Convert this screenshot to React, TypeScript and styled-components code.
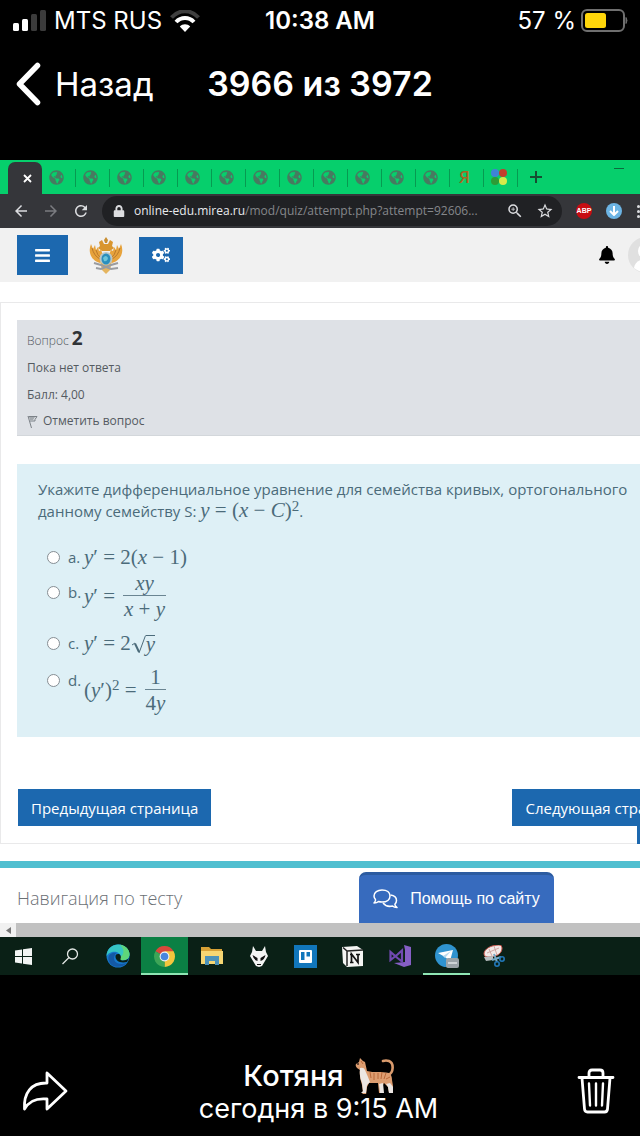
import React from "react";
import styled, { createGlobalStyle } from "styled-components";
import { FaBars, FaBell, FaCogs, FaLock, FaGlobeAmericas } from "react-icons/fa";
import { MdArrowBack, MdArrowForward, MdRefresh, MdStarBorder, MdZoomIn } from "react-icons/md";

const Global = createGlobalStyle`
  *, *::before, *::after { box-sizing: border-box; }
  body { margin: 0; background: #000; }
  button { font: inherit; border: 0; margin: 0; padding: 0; background: none; color: inherit; }
  p, h1, h2, ul { margin: 0; padding: 0; font: inherit; }
  svg { display: block; flex: none; }
`;

const Screen = styled.div`
  min-height: 100vh;
  display: flex;
  flex-direction: column;
  background: #000;
  color: #fff;
  overflow: hidden;
  font-family: Inter, "Liberation Sans", sans-serif;
`;

/* phone chrome */
const StatusBar = styled.div`
  display: grid;
  grid-template-columns: 1fr auto 1fr;
  align-items: center;
  height: 42px;
  padding: 0 12px;
  font-size: 24px;
  line-height: 28px;
`;
const StatusGroup = styled.div<{ $end?: boolean }>`
  display: flex;
  align-items: center;
  gap: ${(p) => (p.$end ? 5 : 8)}px;
  justify-content: ${(p) => (p.$end ? "flex-end" : "flex-start")};
  white-space: nowrap;
`;
const Clock = styled.time`
  font-weight: 600;
`;
const NavBar = styled.header`
  display: grid;
  grid-template-columns: 1fr auto 1fr;
  align-items: center;
  height: 84px;
  margin-bottom: 34px;
  padding: 0 16px;
`;
const BackButton = styled.button`
  display: flex;
  align-items: center;
  gap: 14px;
  font-size: 33px;
  line-height: 40px;
`;
const Title = styled.h1`
  font-size: 34px;
  line-height: 40px;
  font-weight: 600;
  white-space: nowrap;
`;

/* photo */
const Photo = styled.main`
  display: flex;
  flex-direction: column;
  overflow: hidden;
  background: #fff;
  color: #545a61;
  font-family: "Open Sans", "Noto Sans", sans-serif;
`;
const TabStrip = styled.div`
  display: flex;
  align-items: stretch;
  height: 34px;
  padding-left: 8px;
  background: #06cf6c;
`;
const ActiveTab = styled.button`
  display: flex;
  align-items: center;
  justify-content: center;
  width: 34px;
  margin-top: 2px;
  padding-left: 4px;
  border-radius: 7px 7px 0 0;
  background: #35363a;
`;
const Tab = styled.button`
  position: relative;
  display: flex;
  align-items: center;
  justify-content: center;
  width: 34px;
  padding-right: 5px;
  color: #477a60;
  font-size: 15px;
  &::after {
    content: "";
    position: absolute;
    right: 0;
    top: 9px;
    bottom: 7px;
    width: 1px;
    background: #079a51;
  }
`;
const Yandex = styled.span`
  color: #a8641f;
  font: 600 17px/18px "Open Sans", sans-serif;
`;
const NewTab = styled.button`
  display: flex;
  align-items: center;
  justify-content: center;
  width: 36px;
`;
const Minimise = styled.button`
  width: 10px;
  height: 1px;
  margin: 8px 16px 0 auto;
  background: #0c6b3d;
`;
const Toolbar = styled.div`
  display: flex;
  align-items: center;
  height: 34px;
  padding-left: 6px;
  background: #35363a;
  color: #dcdde0;
  overflow: hidden;
`;
const ToolButton = styled.button<{ $dim?: boolean }>`
  display: flex;
  align-items: center;
  justify-content: center;
  flex: none;
  width: 30px;
  font-size: 18px;
  color: ${(p) => (p.$dim ? "#7b7c80" : "#dcdde0")};
`;
const UrlBar = styled.div`
  display: flex;
  align-items: center;
  flex: 1;
  min-width: 0;
  height: 30px;
  margin-left: 6px;
  padding: 0 2px 0 11px;
  border-radius: 15px;
  background: #202124;
  font-size: 12px;
`;
const Url = styled.span`
  flex: 1;
  min-width: 0;
  margin-left: 9px;
  font-size: 12px;
  line-height: 20px;
  color: #85878b;
  white-space: nowrap;
  b { font-weight: 400; color: #e8eaed; }
`;
const Extension = styled.button<{ $bg: string }>`
  display: flex;
  align-items: center;
  justify-content: center;
  flex: none;
  width: 16px;
  height: 16px;
  margin-left: 14px;
  border-radius: 8px;
  background: ${(p) => p.$bg};
  color: #fff;
  font: 700 7px/16px "Liberation Sans", sans-serif;
`;
const MenuDots = styled.button`
  display: flex;
  flex-direction: column;
  gap: 2px;
  margin-left: 15px;
  i { display: block; width: 3px; height: 3px; border-radius: 2px; background: #dcdde0; }
`;

/* site */
const SiteHeader = styled.header`
  display: flex;
  align-items: center;
  height: 54px;
  padding-left: 17px;
  background: #f1f1f1;
  overflow: hidden;
`;
const SquareButton = styled.button<{ $wide?: boolean }>`
  display: flex;
  align-items: center;
  justify-content: center;
  width: ${(p) => (p.$wide ? 51 : 44)}px;
  height: ${(p) => (p.$wide ? 40 : 37)}px;
  background: #1c68af;
  color: #fff;
  font-size: ${(p) => (p.$wide ? 17 : 18)}px;
`;
const Emblem = styled.a`
  display: block;
  margin: 0 16px 0 21px;
`;
const HeaderEnd = styled.div`
  display: flex;
  align-items: center;
  gap: 12px;
  margin-left: auto;
  margin-right: -24px;
  color: #000;
  font-size: 18px;
`;
const Avatar = styled.a`
  display: block;
`;
const Card = styled.section`
  position: relative;
  margin-top: 20px;
  padding: 17px 0 17px 16px;
  border: 1px solid #e9e9ea;
  border-right: 0;
`;
const Info = styled.div`
  padding: 7px 10px 1px;
  background: #dee1e6;
  border-bottom: 1px solid #d3d7db;
  font-size: 12px;
  line-height: 27px;
`;
const InfoTitle = styled.h2`
  line-height: 27px;
  font-weight: 300;
  b { font-size: 19px; line-height: 20px; font-weight: 700; color: #2f3337; }
`;
const FlagButton = styled.button`
  display: flex;
  align-items: center;
  gap: 5px;
  line-height: 26px;
`;
const Question = styled.form`
  margin-top: 28px;
  padding: 14px 0 21px 21px;
  background: #def0f6;
  color: #4b6b7a;
`;
const Prompt = styled.p`
  margin-bottom: 22px;
  font-size: 15px;
  line-height: 22px;
`;
const Answer = styled.label<{ $h: number }>`
  display: flex;
  align-items: center;
  height: ${(p) => p.$h}px;
  padding-left: 9px;
  font-size: 15px;
`;
const Lead = styled.span<{ $lift: number }>`
  display: flex;
  align-items: center;
  gap: 8px;
  width: 37px;
  line-height: 20px;
  padding-bottom: ${(p) => p.$lift}px;
`;
const Radio = styled.input`
  appearance: none;
  flex: none;
  width: 13px;
  height: 13px;
  margin: 0;
  border: 1px solid #868e94;
  border-radius: 50%;
  background: #fff;
`;
const MathText = styled.span`
  display: inline-flex;
  align-items: center;
  font: 21px/20px "Liberation Serif", serif;
  white-space: pre;
  sup { font-size: 15px; line-height: 14px; padding-bottom: 10px; }
`;
const InlineMath = styled.span`
  font: 21px/20px "Liberation Serif", serif;
  sup { font-size: 15px; line-height: 0; vertical-align: 6px; }
`;
const Fraction = styled.span`
  display: inline-flex;
  flex-direction: column;
  align-items: center;
  margin-left: 8px;
`;
const Numerator = styled.span`
  align-self: stretch;
  padding: 0 1px 2px;
  border-bottom: 1px solid #6a8592;
  text-align: center;
`;
const Denominator = styled.span`
  padding: 3px 1px 0;
`;
const Radicand = styled.span`
  border-top: 1px solid #4b6b7a;
  line-height: 16px;
`;
const PageButtons = styled.div`
  display: flex;
  justify-content: space-between;
  margin: 52px -56px 0 1px;
`;
const PageButton = styled.button`
  height: 37px;
  padding: 0 13px;
  background: #1c68af;
  color: #fff;
  font-size: 15px;
  line-height: 22px;
  white-space: nowrap;
`;
const SideToggle = styled.button`
  position: absolute;
  right: 0;
  bottom: -1px;
  width: 3px;
  height: 18px;
  background: #1c68af;
`;
const NavBlock = styled.section`
  position: relative;
  display: flex;
  align-items: center;
  height: 62px;
  margin-top: 17px;
  padding-left: 17px;
  border-top: 7px solid #50bfd0;
  h2 { font-size: 18px; line-height: 26px; font-weight: 300; color: #6b7075; padding-top: 5px; }
`;
const HelpButton = styled.button`
  position: absolute;
  right: 86px;
  bottom: 0;
  display: flex;
  align-items: center;
  justify-content: center;
  gap: 12px;
  width: 195px;
  height: 51px;
  border-top: 3px solid #2c5ba0;
  border-radius: 7px 7px 0 0;
  background: #376bbe;
  color: #fff;
  font: 16px/20px "Liberation Sans", sans-serif;
`;
const ScrollBar = styled.div`
  display: flex;
  align-items: center;
  height: 14px;
  padding-left: 6px;
  background: #c1c1c1 linear-gradient(#f1f1f1, #f1f1f1) left / 16px 100% no-repeat;
`;
const TaskBar = styled.nav`
  display: flex;
  height: 38px;
  background: #0a2016;
`;
const Task = styled.button<{ $active?: boolean; $open?: boolean }>`
  display: flex;
  align-items: center;
  justify-content: center;
  width: 47px;
  background: ${(p) => (p.$active ? "#0b8044" : "transparent")};
  box-shadow: ${(p) => (p.$active || p.$open ? "inset 0 -2px 0 #8fe6b4" : "none")};
`;

/* footer */
const Footer = styled.footer`
  display: grid;
  grid-template-columns: 1fr auto 1fr;
  align-items: center;
  margin-top: auto;
  padding: 0 25px 12px 22px;
`;
const FooterButton = styled.button<{ $end?: boolean }>`
  justify-self: ${(p) => (p.$end ? "end" : "start")};
`;
const Caption = styled.div`
  display: flex;
  flex-direction: column;
  align-items: center;
`;
const Sender = styled.p`
  display: flex;
  align-items: center;
  gap: 11px;
  font-size: 29px;
  line-height: 36px;
  font-weight: 500;
`;
const Sent = styled.p`
  font-size: 27px;
  line-height: 30px;
  white-space: nowrap;
`;

const Signal = () => (
  <svg width="34" height="22" viewBox="0 0 34 22">
    <rect x="1" y="13" width="6" height="8" rx="1.5" fill="#fff" />
    <rect x="10" y="9" width="6" height="12" rx="1.5" fill="#fff" />
    <rect x="19" y="4" width="6" height="17" rx="1.5" fill="#3b3b3b" />
    <rect x="28" y="0" width="6" height="21" rx="1.5" fill="#3b3b3b" />
  </svg>
);
const Wifi = () => (
  <svg width="30" height="22" viewBox="0 0 30 22" fill="none">
    <path d="M1.5 7.500C9-.8 21-.8 28.500 7.500" stroke="#3f3f3f" strokeWidth="4" />
    <path d="M6 12c5-5.300 13-5.300 18 0" stroke="#fff" strokeWidth="4" />
    <path d="M9.800 16.500c2.800-3 7.600-3 10.400 0L15 22z" fill="#fff" />
  </svg>
);
const Battery = () => (
  <svg width="47" height="24" viewBox="0 0 47 24">
    <rect x="1" y="1" width="42" height="21" rx="5" fill="none" stroke="#6f6f6f" strokeWidth="2" />
    <rect x="4" y="4" width="21" height="15" rx="2.500" fill="#ffd60a" />
    <path d="M45 8.500q2 3 0 6z" fill="#6f6f6f" stroke="#6f6f6f" />
  </svg>
);
const Chevron = () => (
  <svg width="25" height="44" viewBox="0 0 25 44" fill="none">
    <path d="M21.500 3.500L3.500 22l18 18.500" stroke="#fff" strokeWidth="5.500" strokeLinecap="round" strokeLinejoin="round" />
  </svg>
);
const Eagle = () => (
  <svg width="34" height="37" viewBox="0 0 34 37">
    <path d="M17 0l2 3-1 3h-2l-1-3z" fill="#c98e32" />
    <path d="M10 5l3-2 2 4h4l2-4 3 2-1 4 2 2-4 3h-8l-4-3 2-2z" fill="#d9962f" />
    <path d="M2 7C-1 14 1 23 11 26l4-6-3-7-2 1-1-4-2 3-1-5-2 4z" fill="#e7a33c" />
    <path d="M32 7c3 7 1 16-9 19l-4-6 3-7 2 1 1-4 2 3 1-5 2 4z" fill="#e7a33c" />
    <path d="M3 11q2 8 8 11M7 13q1 5 5 8M31 11q-2 8-8 11M27 13q-1 5-5 8" stroke="#b9782a" fill="none" />
    <path d="M11 24h12l-2 9-4 4-4-4z" fill="#e5b55f" />
    <path d="M5 26l7 2 10 4 7-1M29 26l-7 2-10 4-5-1" stroke="#9a9ca0" strokeWidth="2" fill="none" />
    <circle cx="17" cy="21.500" r="6.500" fill="#b7c6c9" />
    <ellipse cx="17" cy="22" rx="4.500" ry="5.500" fill="#2b8fbd" />
    <path d="M14 21q3-4 5 0-1 4-4 3z" fill="#6cc5d9" />
  </svg>
);
const AvatarIcon = () => (
  <svg width="36" height="36" viewBox="0 0 36 36">
    <circle cx="18" cy="18" r="18" fill="#e0e0e0" />
    <circle cx="18" cy="14" r="8" fill="#fff" />
    <path d="M6 31c1-12 23-12 24 0q-12 9-24 0z" fill="#fff" />
  </svg>
);
const Flag = () => (
  <svg width="11" height="13" viewBox="0 0 11 13" fill="none" stroke="#7b8187">
    <path d="M1 1l3.500 12M1.500 1.500H10L8 4.500v1.500H3" />
    <path d="M2 2h6l-2 3H3z" fill="#a4a9ae" stroke="none" />
  </svg>
);
const Root = () => (
  <svg width="15" height="21" viewBox="0 0 15 21" fill="none" stroke="#4b6b7a">
    <path d="M1 12l3-2" />
    <path d="M4 10.500l4 8.500" strokeWidth="2" />
    <path d="M8 20L14.500 2.500" />
  </svg>
);
const Chat = () => (
  <svg width="25" height="20" viewBox="0 0 25 20" fill="none" stroke="#fff" strokeWidth="1.500" strokeLinejoin="round">
    <path d="M9 1c5 0 8 2.500 8 6s-3 6-8 6q-2 0-3.500-.5Q4 14 1 14q2-2 1.500-3.500Q1 9 1 7c0-3.500 3.500-6 8-6z" />
    <path d="M17.500 6c3.500.5 6 2.500 6 5.500q0 2-1.500 3.500-.5 1.500 2 3.500-3 0-4.500-1.500-6 1.500-9.500-3" />
  </svg>
);
const Share = () => (
  <svg width="46" height="40" viewBox="0 0 46 40" fill="none" stroke="#fff" strokeWidth="2.800" strokeLinejoin="round">
    <path d="M25 2l19 18-19 18V28C15 27 7 30 2.500 38 1.500 22 9 11.500 25 12z" />
  </svg>
);
const Trash = () => (
  <svg width="38" height="46" viewBox="0 0 38 46" fill="none" stroke="#fff" strokeWidth="2.800" strokeLinecap="round" strokeLinejoin="round">
    <path d="M2 9.500h34M12 9V5q0-3 3-3h8q3 0 3 3v4M5 10l2.500 31q.3 3 3 3h17q2.700 0 3-3L33 10" />
    <path d="M12 15.500l1 22M19 15.500v22M26 15.500l-1 22" strokeWidth="2.400" />
  </svg>
);
const Cat = () => (
  <svg width="39" height="36" viewBox="0 0 39 36">
    <path d="M33 17c6-2 6-12 1-14q-3-1-6 0" fill="none" stroke="#d99a6c" strokeWidth="2.600" strokeLinecap="round" />
    <path d="M1 6l3-2 1-4 3 3 2 1 2 9c7 2 14 0 22 2q3 2 3 7l1 6 0 7h-4l-1-6-4-4-2 4 1 6h-4l-1-10h-9l-2 4-1 8H6l2-2-1-8Q4 19 5 12L2 10q-2-2-1-4z" fill="#dd9d70" />
    <path d="M5 10q4-1 5 2l3 7 2 5-3 3-1 8H6l2-2-1-8Q4 18 5 10zM31 26l4-1 3 4v6h-4l-1-6zM24 26l4-1 1 10h-4z" fill="#ece6e2" />
    <path d="M15 14l1 6M19 15v7M23 15v6M27 14l-1 7M31 15l-2 6M35 19l-4 2M6 3l2 3" stroke="#b8683a" strokeWidth="1" fill="none" />
    <path d="M2 6h2" stroke="#3f2b22" strokeWidth="1.500" />
  </svg>
);

const Windows = () => (
  <svg width="17" height="17" viewBox="0 0 17 17" fill="#f2f4f3">
    <path d="M0 2.500L7 1.500V8H0zM8 1.300L17 0v8H8zM0 9h7v6.500l-7-1zM8 9h9v8l-9-1.300z" />
  </svg>
);
const SearchIcon = () => (
  <svg width="17" height="17" viewBox="0 0 17 17" fill="none" stroke="#e4e8e6" strokeWidth="1.300">
    <circle cx="10.500" cy="6" r="5" />
    <path d="M7 9.500L.5 16" />
  </svg>
);
const Edge = () => (
  <svg width="24" height="24" viewBox="0 0 24 24">
    <circle cx="12" cy="12" r="11.500" fill="#1679cc" />
    <path d="M.5 12C1 3 8 0 13 .5c6 .5 10.500 5 10.500 9.500 0 5-4 7-8.500 6-2-.5-1-1.500-.5-3C15 9 10 7 6 8Q2 9 .5 12z" fill="#36c5c4" />
    <path d="M14 .7c6 .8 9.500 5 9.500 9.300 0 5-4 7-8.500 6-2-.5-1-1.500-.5-3 4-3 4-8-.5-12.300z" fill="#5fd67a" />
    <path d="M8.500 12c-2 5 3 10 12 7-5 6-16 5-18-3-1-5 3-8 8-7q-1.500 1-2 3z" fill="#1459a5" />
    <path d="M9.500 12.500c0 4 4 7 11.500 5.500l2-4c-3 3-8 3-8.500 1.500-.3-1 1-1.500 0-4-1-2-5-2-5 1z" fill="#0a2016" />
  </svg>
);
const Chrome = () => (
  <svg width="21" height="21" viewBox="0 0 21 21">
    <path d="M10.500 10.500L1.400 5.300A10.500 10.500 0 0119.600 5.300z" fill="#d9483b" />
    <path d="M10.500 10.500L19.600 5.300A10.500 10.500 0 0110.500 21z" fill="#f4c63d" />
    <path d="M10.500 10.500V21A10.500 10.500 0 011.400 5.300z" fill="#3da557" />
    <path d="M10.500 5.300h9.100L15 13z" fill="#f4c63d" />
    <circle cx="10.500" cy="10.500" r="4.900" fill="#eef1f4" />
    <circle cx="10.500" cy="10.500" r="3.800" fill="#4a86dd" />
  </svg>
);
const Folder = () => (
  <svg width="22" height="18" viewBox="0 0 22 18">
    <path d="M0 0h8l2 2h11v5H0z" fill="#d7a136" />
    <path d="M0 4h22v13H0z" fill="#f6d673" />
    <path d="M4 18V9h14v9h-4v-4H8v4z" fill="#4c92b9" />
  </svg>
);
const Foobar = () => (
  <svg width="18" height="21" viewBox="0 0 18 21">
    <path d="M3 0l3 5h6l3-5 1 6 2 4-3 5-3 5-3 1-3-1-3-5-3-5 2-4z" fill="#f4f5f4" />
    <path d="M2.500 9l5 3v3q-4-1-5-6zM15.500 9l-5 3v3q4-1 5-6z" fill="#111" />
    <path d="M7 18.500h4" stroke="#111" />
  </svg>
);
const Trello = () => (
  <svg width="23" height="23" viewBox="0 0 23 23">
    <rect width="23" height="23" fill="#1176bb" />
    <rect x="5" y="5" width="13" height="13" rx="1" fill="#fff" />
    <path d="M7 7h3.500v8H7zM12.500 7H16v4.500h-3.500z" fill="#1176bb" />
  </svg>
);
const Notion = () => (
  <svg width="22" height="21" viewBox="0 0 22 21">
    <path d="M0 1l15-1 6 4v16L5 21 1 17z" fill="#f4f4f2" />
    <path d="M1 1.500L5 5v15M5 5l16-1" stroke="#222" strokeWidth="1.500" fill="none" />
    <path d="M9.500 17V8l6.500 8.500V8M8 8.500h2.500M14 8.500h4M8 16.500h3.500" stroke="#111" strokeWidth="1.700" fill="none" />
  </svg>
);
const VisualStudio = () => (
  <svg width="22" height="22" viewBox="0 0 22 22">
    <path d="M15 0l7 2v18l-7 2-10-4 11-1V5z" fill="#865fc5" />
    <path d="M1.500 7v8l7-5.500 4.500-4v11L8.500 13z" fill="none" stroke="#7049b0" strokeWidth="2.200" />
  </svg>
);
const Telegram = () => (
  <svg width="24" height="24" viewBox="0 0 24 24">
    <circle cx="11.500" cy="11.500" r="11.500" fill="#2f93cf" />
    <path d="M3 9l15-3-3 11-5-4z" fill="#fff" />
    <path d="M8 12l8-5-6 7z" fill="#b9d9ec" />
    <rect x="11" y="14" width="13" height="10" rx="2" fill="#9aa3a8" />
    <path d="M13 19h9" stroke="#cdd3d6" strokeWidth="2" />
  </svg>
);
const Snip = () => (
  <svg width="22" height="22" viewBox="0 0 22 22">
    <path d="M1 9C1 4 8 0 16 0q3 0 3 3c0 6-6 9-14 9q-4 0-4-3z" fill="#f2e9e7" stroke="#c9574d" />
    <path d="M4 8l12-5M11 1l3 9M6 4l3 7" stroke="#d0a6a2" />
    <path d="M1 12l9-1v4l-7 1z" fill="#b9bfc1" />
    <path d="M11 9l3 8M18 12l-9 3" stroke="#78a9c5" strokeWidth="2" />
    <circle cx="14" cy="19" r="2.200" fill="none" stroke="#2177b8" strokeWidth="1.600" />
    <circle cx="19" cy="14" r="2.200" fill="none" stroke="#2177b8" strokeWidth="1.600" />
  </svg>
);
const Dots = () => (
  <svg width="16" height="16" viewBox="0 0 16 16">
    <circle cx="4" cy="4" r="4" fill="#3f83d6" />
    <circle cx="12" cy="4" r="4" fill="#c33d2c" />
    <circle cx="4" cy="12" r="4" fill="#2e9b36" />
    <circle cx="12" cy="12" r="4" fill="#d4ea4a" />
  </svg>
);

const tasks = [
  { name: "Пуск", icon: <Windows /> },
  { name: "Поиск", icon: <SearchIcon /> },
  { name: "Edge", icon: <Edge /> },
  { name: "Chrome", icon: <Chrome />, active: true },
  { name: "Проводник", icon: <Folder /> },
  { name: "foobar2000", icon: <Foobar /> },
  { name: "Trello", icon: <Trello /> },
  { name: "Notion", icon: <Notion /> },
  { name: "Visual Studio", icon: <VisualStudio /> },
  { name: "Telegram", icon: <Telegram />, open: true },
  { name: "Ножницы", icon: <Snip /> },
];

const answers = [
  { id: "a", h: 26, lift: 0, math: <><i>y</i>′ = 2(<i>x</i> − 1)</> },
  {
    id: "b", h: 52, lift: 8,
    math: <><i>y</i>′ =<Fraction><Numerator><i>xy</i></Numerator><Denominator><i>x</i> + <i>y</i></Denominator></Fraction></>,
  },
  { id: "c", h: 42, lift: 0, math: <><i>y</i>′ = 2<Root /><Radicand><i>y</i></Radicand></> },
  {
    id: "d", h: 52, lift: 20,
    math: <>(<i>y</i>′)<sup>2</sup> =<Fraction><Numerator>1</Numerator><Denominator>4<i>y</i></Denominator></Fraction></>,
  },
];

export default function App() {
  return (
    <Screen>
      <Global />
      <StatusBar>
        <StatusGroup><Signal />MTS RUS<Wifi /></StatusGroup>
        <Clock>10:38 AM</Clock>
        <StatusGroup $end>57 %<Battery /></StatusGroup>
      </StatusBar>
      <NavBar>
        <BackButton><Chevron />Назад</BackButton>
        <Title>3966 из 3972</Title>
      </NavBar>

      <Photo>
        <TabStrip>
          <ActiveTab aria-label="Закрыть вкладку">
            <svg width="9" height="9" viewBox="0 0 9 9" stroke="#fff" strokeWidth="1.800"><path d="M1 1l7 7M8 1L1 8" /></svg>
          </ActiveTab>
          {Array.from({ length: 12 }, (_, i) => (
            <Tab key={i} aria-label="Вкладка"><FaGlobeAmericas /></Tab>
          ))}
          <Tab><Yandex>Я</Yandex></Tab>
          <Tab aria-label="Вкладка"><Dots /></Tab>
          <NewTab aria-label="Новая вкладка">
            <svg width="12" height="12" viewBox="0 0 12 12" stroke="#174d32" strokeWidth="2"><path d="M6 0v12M0 6h12" /></svg>
          </NewTab>
          <Minimise aria-label="Свернуть" />
        </TabStrip>
        <Toolbar>
          <ToolButton aria-label="Назад"><MdArrowBack /></ToolButton>
          <ToolButton aria-label="Вперёд" $dim><MdArrowForward /></ToolButton>
          <ToolButton aria-label="Обновить"><MdRefresh /></ToolButton>
          <UrlBar>
            <FaLock />
            <Url><b>online-edu.mirea.ru</b>/mod/quiz/attempt.php?attempt=92606...</Url>
            <ToolButton aria-label="Масштаб"><MdZoomIn /></ToolButton>
            <ToolButton aria-label="В закладки"><MdStarBorder /></ToolButton>
          </UrlBar>
          <Extension $bg="#c70d12">ABP</Extension>
          <Extension $bg="#6cb4e4" aria-label="Расширение">
            <svg width="10" height="10" viewBox="0 0 10 10" fill="none" stroke="#fff" strokeWidth="2"><path d="M5 0v8M1 5l4 4 4-4" /></svg>
          </Extension>
          <MenuDots aria-label="Меню"><i /><i /><i /></MenuDots>
        </Toolbar>

        <SiteHeader>
          <SquareButton $wide aria-label="Меню сайта"><FaBars /></SquareButton>
          <Emblem href="#" aria-label="На главную"><Eagle /></Emblem>
          <SquareButton aria-label="Настройки"><FaCogs /></SquareButton>
          <HeaderEnd>
            <FaBell />
            <Avatar href="#" aria-label="Профиль"><AvatarIcon /></Avatar>
          </HeaderEnd>
        </SiteHeader>

        <Card>
          <Info>
            <InfoTitle>Вопрос <b>2</b></InfoTitle>
            <p>Пока нет ответа</p>
            <p>Балл: 4,00</p>
            <FlagButton><Flag />Отметить вопрос</FlagButton>
          </Info>
          <Question>
            <Prompt>
              Укажите дифференциальное уравнение для семейства кривых, ортогонального
              <br />
              данному семейству S: <InlineMath><i>y</i> = (<i>x</i> − <i>C</i>)<sup>2</sup></InlineMath>.
            </Prompt>
            {answers.map((a) => (
              <Answer key={a.id} $h={a.h}>
                <Lead $lift={a.lift}><Radio type="radio" name="answer" value={a.id} />{a.id}.</Lead>
                <MathText>{a.math}</MathText>
              </Answer>
            ))}
          </Question>
          <PageButtons>
            <PageButton>Предыдущая страница</PageButton>
            <PageButton>Следующая страница</PageButton>
          </PageButtons>
          <SideToggle aria-label="Панель" />
        </Card>

        <NavBlock>
          <h2>Навигация по тесту</h2>
          <HelpButton><Chat />Помощь по сайту</HelpButton>
        </NavBlock>
        <ScrollBar>
          <svg width="5" height="7" viewBox="0 0 5 7" fill="#777"><path d="M5 0v7L0 3.500z" /></svg>
        </ScrollBar>
        <TaskBar>
          {tasks.map((t) => (
            <Task key={t.name} aria-label={t.name} $active={t.active} $open={t.open}>{t.icon}</Task>
          ))}
        </TaskBar>
      </Photo>

      <Footer>
        <FooterButton aria-label="Поделиться"><Share /></FooterButton>
        <Caption>
          <Sender>Котяня <Cat /></Sender>
          <Sent>сегодня в 9:15 AM</Sent>
        </Caption>
        <FooterButton $end aria-label="Удалить"><Trash /></FooterButton>
      </Footer>
    </Screen>
  );
}
